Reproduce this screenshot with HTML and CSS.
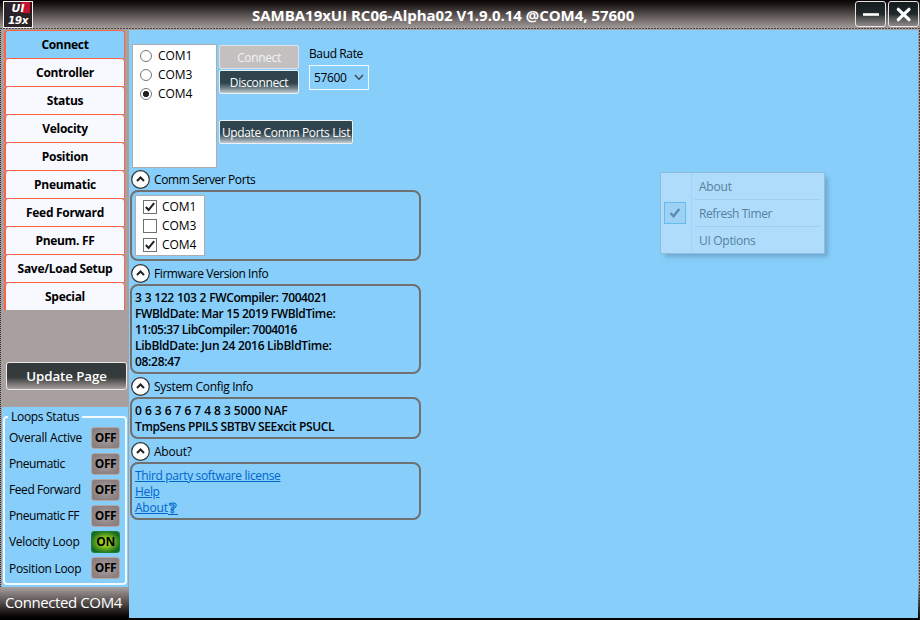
FILE: index.html
```
<!DOCTYPE html>
<html lang="en">
<head>
<meta charset="utf-8">
<title>SAMBA19xUI RC06-Alpha02</title>
<link rel="stylesheet" href="styles.css">
</head>
<body>
<div class="window">
  <header class="titlebar">
    <div class="logo"><span>UI</span><span class="num">19x</span></div>
    <h1 class="title">SAMBA19xUI RC06-Alpha02 V1.9.0.14 @COM4, 57600</h1>
    <div class="winbtns">
      <button class="winbtn" aria-label="Minimize"><svg width="31" height="26" viewBox="0 0 31 26"><path d="M8 13.5H24" stroke="#fff" stroke-width="2.6"/></svg></button>
      <button class="winbtn" aria-label="Close"><svg width="31" height="26" viewBox="0 0 31 26"><path d="M10.3 8.3L21 18.7M21 8.3L10.3 18.7" stroke="#fff" stroke-width="3.2" stroke-linecap="round"/></svg></button>
    </div>
  </header>
  <div class="body">
    <aside class="sidebar">
      <nav class="tabs">
        <a class="tab active">Connect</a>
        <a class="tab">Controller</a>
        <a class="tab">Status</a>
        <a class="tab">Velocity</a>
        <a class="tab">Position</a>
        <a class="tab">Pneumatic</a>
        <a class="tab">Feed Forward</a>
        <a class="tab">Pneum. FF</a>
        <a class="tab">Save/Load Setup</a>
        <a class="tab">Special</a>
      </nav>
      <button class="update-page">Update Page</button>
      <section class="loops">
        <fieldset class="group">
          <legend>Loops Status</legend>
          <div class="loop"><span class="wide">Overall Active</span><b class="led">OFF</b></div>
          <div class="loop"><span class="tight">Pneumatic</span><b class="led">OFF</b></div>
          <div class="loop"><span class="tight">Feed Forward</span><b class="led">OFF</b></div>
          <div class="loop"><span class="tight">Pneumatic FF</span><b class="led">OFF</b></div>
          <div class="loop"><span>Velocity Loop</span><b class="led on">ON</b></div>
          <div class="loop"><span>Position Loop</span><b class="led">OFF</b></div>
        </fieldset>
      </section>
      <footer class="status">Connected COM4</footer>
    </aside>
    <main class="page">
      <section class="connect">
        <div class="portlist">
          <label class="opt"><i class="radio"></i>COM1</label>
          <label class="opt"><i class="radio"></i>COM3</label>
          <label class="opt"><i class="radio checked"></i>COM4</label>
        </div>
        <div class="actions">
          <button class="btn disabled">Connect</button>
          <button class="btn">Disconnect</button>
          <button class="btn wide">Update Comm Ports List</button>
        </div>
        <div class="baud">
          <div>Baud Rate</div>
          <div class="combo"><span>57600</span><svg width="10" height="7" viewBox="0 0 10 7"><path d="M1 1L5 5.2L9 1" fill="none" stroke="#3f4a52" stroke-width="1.5"/></svg></div>
        </div>
      </section>

      <section class="expander">
        <h2 class="head"><svg class="chev" width="19" height="19" viewBox="0 0 19 19"><circle cx="9.5" cy="9.5" r="8.8" fill="#fff" stroke="#333" stroke-width="1.2"/><path d="M6 11L9.5 7.5L13 11" fill="none" stroke="#222" stroke-width="2"/></svg><span class="tight">Comm Server Ports</span></h2>
        <div class="box">
          <div class="checklist">
            <label class="opt"><i class="check"><svg width="12" height="12" viewBox="0 0 12 12"><path d="M1.8 6L4.6 9L10.2 2.2" fill="none" stroke="#222" stroke-width="2"/></svg></i>COM1</label>
            <label class="opt"><i class="check"></i>COM3</label>
            <label class="opt"><i class="check"><svg width="12" height="12" viewBox="0 0 12 12"><path d="M1.8 6L4.6 9L10.2 2.2" fill="none" stroke="#222" stroke-width="2"/></svg></i>COM4</label>
          </div>
        </div>
      </section>

      <section class="expander">
        <h2 class="head"><svg class="chev" width="19" height="19" viewBox="0 0 19 19"><circle cx="9.5" cy="9.5" r="8.8" fill="#fff" stroke="#333" stroke-width="1.2"/><path d="M6 11L9.5 7.5L13 11" fill="none" stroke="#222" stroke-width="2"/></svg><span class="tight">Firmware Version Info</span></h2>
        <div class="box info">
          <div class="digits">3 3 122 103 2 FWCompiler: 7004021</div>
          <div class="narrow">FWBldDate: Mar 15 2019 FWBldTime:</div>
          <div class="narrower">11:05:37 LibCompiler: 7004016</div>
          <div>LibBldDate: Jun 24 2016 LibBldTime:</div>
          <div>08:28:47</div>
        </div>
      </section>

      <section class="expander">
        <h2 class="head"><svg class="chev" width="19" height="19" viewBox="0 0 19 19"><circle cx="9.5" cy="9.5" r="8.8" fill="#fff" stroke="#333" stroke-width="1.2"/><path d="M6 11L9.5 7.5L13 11" fill="none" stroke="#222" stroke-width="2"/></svg><span>System Config Info</span></h2>
        <div class="box info">
          <div class="loose">0 6 3 6 7 6 7 4 8 3 5000 NAF</div>
          <div class="narrow">TmpSens PPILS SBTBV SEExcit PSUCL</div>
        </div>
      </section>

      <section class="expander">
        <h2 class="head"><svg class="chev" width="19" height="19" viewBox="0 0 19 19"><circle cx="9.5" cy="9.5" r="8.8" fill="#fff" stroke="#333" stroke-width="1.2"/><path d="M6 11L9.5 7.5L13 11" fill="none" stroke="#222" stroke-width="2"/></svg><span class="wide">About?</span></h2>
        <div class="box links">
          <div><a>Third party software license</a></div>
          <div><a>Help</a></div>
          <div class="about"><a class="wide">About</a><a class="q">?</a></div>
        </div>
      </section>

      <div class="menu">
        <div class="item"><i class="slot"></i><span class="wide">About</span></div>
        <div class="item"><i class="slot marked"><svg width="12" height="12" viewBox="0 0 12 12"><path d="M1.5 6.2L4.6 9.3L10.3 2" fill="none" stroke="#5b8bb0" stroke-width="2.4"/></svg></i><span class="tight">Refresh Timer</span></div>
        <div class="item"><i class="slot"></i><span>UI Options</span></div>
      </div>
    </main>
  </div>
</div>
</body>
</html>
```

FILE: styles.css
```
* { box-sizing: border-box; }

body {
  margin: 0;
  font: 12px/16px "Open Sans", "Noto Sans", sans-serif;
  letter-spacing: -0.3px;
  color: #000;
}

button { font: inherit; letter-spacing: inherit; padding: 0; }

.window {
  width: 920px;
  height: 620px;
  display: flex;
  flex-direction: column;
  overflow: hidden;
  background: #a8a09e;
}

/* title bar */
.titlebar {
  height: 30px;
  flex: none;
  display: flex;
  align-items: flex-start;
  padding: 1px 1px 0 3px;
  background:
    repeating-linear-gradient(90deg, #4a4341 0 2px, #a8a09e 2px 3px) 0 28px / 100% 1px no-repeat,
    linear-gradient(#080404 0, #1a1414 4px, #a39b99 28px, #a8a09e 30px);
}

.logo {
  width: 30px;
  height: 27px;
  padding-top: 1px;
  border: 1px solid #f0eeee;
  background: linear-gradient(90deg, transparent 60%, #c4122f 60% 92%, #3a1018 92%) 0 0 / 100% 11px no-repeat, #2a2226;
  color: #fff;
  font: italic bold 11px/12px "DejaVu Sans", sans-serif;
  letter-spacing: 0;
  display: flex;
  flex-direction: column;
  align-items: center;
}

.logo .num { font-size: 10.5px; line-height: 10px; letter-spacing: -0.4px; }

.title {
  flex: 1;
  margin: 0;
  padding-left: 219px;
  color: #fff;
  font-size: 15px;
  line-height: 29px;
  font-weight: 700;
  letter-spacing: -0.02px;
}

.winbtns { display: flex; gap: 2px; }

.winbtn {
  width: 31px;
  height: 26px;
  border: 1px solid #e6e4e4;
  border-radius: 3px;
  background: linear-gradient(#141a1b 0, #20292b 50%, #4b4e4e 65%, #8f8a89 100%);
  display: flex;
  align-items: center;
  justify-content: center;
}

.winbtn svg { flex: none; }

/* frame */
.body {
  height: 590px;
  display: flex;
  padding: 0 2px 0 0;
  background:
    repeating-linear-gradient(rgba(30, 26, 25, 0.75) 0 2px, transparent 2px 3px) 100% 0 / 1px 100% no-repeat,
    linear-gradient(#a8a09e 0, #a8a09e 555px, #000 588px);
}

.sidebar {
  width: 129px;
  flex: none;
  display: flex;
  flex-direction: column;
  background: repeating-linear-gradient(#2e2a29 0 1px, #a8a09e 1px 2px) 0 0 / 1px 100% no-repeat, #a8a09e;
}

.tabs { width: 121px; margin-left: 4px; }

.tab {
  display: block;
  height: 28px;
  border: solid #ff6347;
  border-width: 1px 1px 0 2px;
  border-radius: 4px 4px 0 0;
  background: #f8f8ff;
  font-weight: 700;
  line-height: 27px;
  text-align: center;
}

.tab.active { background: #87cefa; }

.update-page {
  width: 121px;
  height: 28px;
  flex: none;
  margin: 52px 0 17px 6px;
  border: 1px solid #eceaea;
  border-radius: 3px;
  background: linear-gradient(#333a3b 0, #363b3c 55%, #6a6767 75%, #a8a09e 100%);
  color: #fff;
  font-size: 13.33px;
  font-weight: 600;
  letter-spacing: -0.1px;
}

.loops {
  height: 180px;
  flex: none;
  margin: 0 1px 0 2px;
  padding: 3px 1px 0 1px;
  background: #87cefa;
}

.group {
  margin: 0;
  padding: 1px 5px 0 4px;
  height: 175px;
  border: 2px solid #f4faff;
  border-radius: 4px;
}

.group legend { padding: 0 3px; margin-left: -1px; height: 14px; line-height: 14px; }

.loop {
  height: 26.1px;
  display: flex;
  align-items: center;
  justify-content: space-between;
}

.led {
  width: 29px;
  height: 22px;
  margin-bottom: 1px;
  border: 1px solid #b0a7a6;
  border-radius: 3px;
  background: radial-gradient(#aaa2a1 0, #8b7f7f 75%);
  font-weight: 700;
  line-height: 20px;
  letter-spacing: -0.4px;
  text-align: center;
}

.led.on {
  border-color: #1f8031;
  background: radial-gradient(#c5e619 0, #86bf1b 35%, #176b22 80%);
}

.tight { letter-spacing: -0.42px; }
.wide { letter-spacing: -0.22px; }

.status {
  flex: 1;
  padding-left: 5px;
  background: linear-gradient(#a8a09e 0, #0a0505 29px, #000 100%);
  color: #fff;
  font-size: 15px;
  line-height: 30px;
  letter-spacing: -0.4px;
}

/* main page */
.page {
  flex: 1;
  height: 588px;
  position: relative;
  padding: 14px 0 0 1px;
  background: #87cefa;
  box-shadow: 0 2px #000;
}

.connect { display: flex; align-items: flex-start; height: 126px; }

.portlist {
  width: 85px;
  height: 124px;
  margin-left: 2px;
  padding: 1px 0 0 7px;
  border: 1px solid #abadb3;
  background: #fff;
}

.opt {
  display: flex;
  align-items: center;
  height: 19px;
  gap: 6px;
  font-weight: 500;
  letter-spacing: -0.05px;
}

.radio {
  width: 12px;
  height: 12px;
  border: 1px solid #777;
  border-radius: 50%;
  background: #fff;
}

.radio.checked { background: radial-gradient(circle, #222 0 2.8px, #fff 3.4px); }

.actions { display: flex; flex-direction: column; margin: 1px 0 0 2px; width: 90px; }

.btn {
  width: 80px;
  height: 24px;
  margin-bottom: 1px;
  padding-top: 2px;
  border: 1px solid #e9f1f5;
  border-radius: 2px;
  background: linear-gradient(#2f444d 0, #2f444d 55%, #71818a 78%, #c3ccd3 100%);
  color: #fff;
  white-space: nowrap;
  letter-spacing: -0.36px;
}

.btn.disabled { background: #c4c0c0; border-color: #dfe3e6; color: #eef3f5; }

.btn.wide { width: 134px; margin-top: 25px; }

.baud { margin-top: 2px; letter-spacing: -0.38px; }

.combo {
  width: 60px;
  height: 25px;
  margin-top: 3px;
  border: 1px solid #f2f9ff;
  display: flex;
  align-items: center;
  justify-content: space-between;
  padding: 0 4px;
}

.expander { margin-bottom: 3px; width: 291px; }

.head {
  height: 20px;
  margin: 0;
  padding-left: 1px;
  display: flex;
  gap: 4px;
  font-size: 12px;
  font-weight: 400;
  line-height: 20px;
}

.box {
  border: 2px solid #707070;
  border-radius: 8px;
  padding: 3px;
}

.checklist {
  width: 70px;
  height: 61px;
  padding: 1px 0 0 7px;
  border: 1px solid #abadb3;
  background: #fff;
}

.checklist .opt { gap: 5px; }

.check {
  width: 14px;
  height: 14px;
  border: 1px solid #707070;
  background: #fff;
  display: flex;
}

.info { font-weight: 600; padding: 4px 3px 2px; }
.info .digits { letter-spacing: -0.4px; word-spacing: 0.5px; }
.info .narrow { letter-spacing: -0.36px; }
.info .narrower { letter-spacing: -0.46px; }
.info .loose { letter-spacing: -0.05px; }

.links { padding: 4px 3px 2px; letter-spacing: -0.34px; }
.links a { color: #0066cc; text-decoration: underline; }
.about { display: flex; height: 16px; }

.links .q {
  width: 10px;
  height: 15px;
  font: bold 15px/14px "Open Sans", sans-serif;
  text-align: center;
  text-decoration: none;
  color: #87cefa;
  -webkit-text-stroke: 1px #0066cc;
  border-bottom: 1px solid #0066cc;
}

/* fading context menu */
.menu {
  position: absolute;
  left: 531px;
  top: 142px;
  width: 165px;
  height: 82px;
  padding: 0 3px;
  border: 1px solid #8dbcdf;
  background: linear-gradient(90deg, transparent 30px, #a3d3f4 30px 31px, transparent 31px), #afdcfa;
  box-shadow: 4px 4px 4px -1px #6fa9cf;
  color: #55819f;
}

.item { display: flex; align-items: center; height: 27px; }
.item span { flex: 1; margin-left: 8px; padding-left: 5px; line-height: 26px; padding-top: 1px; height: 27px; border-bottom: 1px solid #a0d0f1; }
.item:last-child span { border-bottom-color: transparent; }

.slot {
  width: 22px;
  height: 22px;
  display: flex;
  align-items: center;
  justify-content: center;
}

.slot.marked { margin-bottom: 1px; border: 1px solid #64bbee; background: #9dd2f6; }
```
